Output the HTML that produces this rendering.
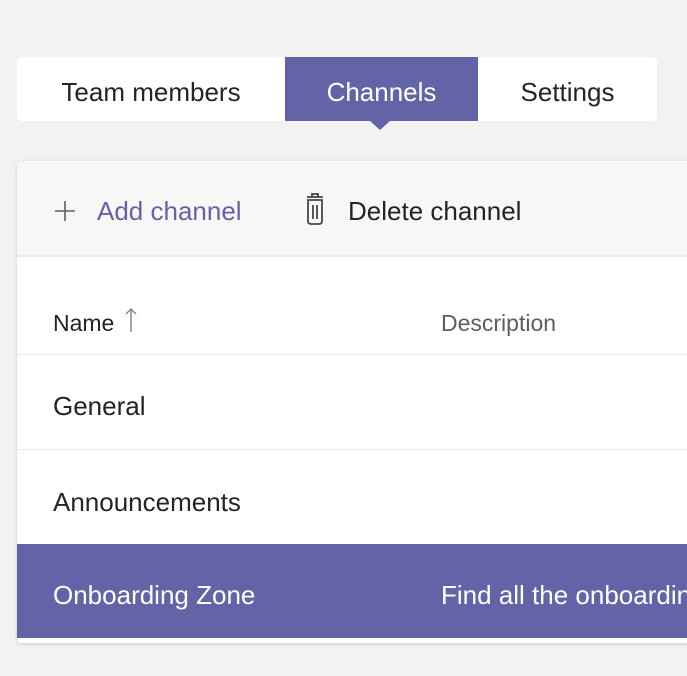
<!DOCTYPE html>
<html><head><style>
body{margin:0;width:687px;height:676px;background:#f3f2f1;font-family:"Liberation Sans",sans-serif;overflow:hidden;position:relative;color:#252423}
.tabs{position:absolute;left:17px;top:57px;width:640px;height:64px;background:#fff;border-radius:5px}
.tab{position:absolute;top:3px;height:64px;line-height:64px;font-size:26px;text-align:center}
.sel{background:#6264a7;color:#fff;top:0;line-height:70px}
.arrow{position:absolute;left:370px;top:121px;width:0;height:0;border-left:10px solid transparent;border-right:10px solid transparent;border-top:9px solid #6264a7}
.card{position:absolute;left:17px;top:161px;width:700px;height:482px;background:#fff;border-radius:4px;box-shadow:0 1px 4px rgba(0,0,0,.15);overflow:hidden}
.tool{position:absolute;left:0;top:0;width:100%;height:94px;background:#f8f7f6;border-bottom:2px solid #edebe9}
.t{position:absolute;font-size:26px;white-space:nowrap}
.row{position:absolute;left:0;width:100%;border-bottom:1px solid #edebe9}
</style></head><body>
<div class="tabs">
<div class="tab" style="left:0;width:268px">Team members</div>
<div class="tab sel" style="left:268px;width:193px">Channels</div>
<div class="tab" style="left:461px;width:179px">Settings</div>
</div>
<div class="arrow"></div>
<div class="card">
<div class="tool">
<svg style="position:absolute;left:36px;top:38px" width="24" height="24" viewBox="0 0 24 24"><path d="M12 2V22M2 12H22" stroke="#605e5c" stroke-width="1.6" fill="none"/></svg>
<div class="t" style="left:80px;top:35px;color:#6264a7">Add channel</div>
<svg style="position:absolute;left:287px;top:31px" width="22" height="34" viewBox="0 0 22 34"><path d="M8 5V2H14V5M3 5H19M4 8H18V29Q18 32 15 32H7Q4 32 4 29Z M9 13V27M13 13V27" stroke="#484644" stroke-width="1.8" fill="none"/></svg>
<div class="t" style="left:331px;top:35px">Delete channel</div>
</div>
<div class="row" style="top:96px;height:97px">
<div class="t" style="left:36px;top:53px;font-size:23px">Name</div>
<svg style="position:absolute;left:106px;top:50px" width="16" height="26" viewBox="0 0 16 26"><path d="M8 25V2M3 7L8 2L13 7" stroke="#8a8886" stroke-width="1.5" fill="none"/></svg>
<div class="t" style="left:424px;top:53px;font-size:23px;color:#605e5c">Description</div>
</div>
<div class="row" style="top:193px;height:95px"><div class="t" style="left:36px;top:37px">General</div></div>
<div class="row" style="top:289px;height:94px"><div class="t" style="left:36px;top:37px">Announcements</div></div>
<div class="row" style="top:383px;height:94px;background:#6264a7;color:#fff;border:0">
<div class="t" style="left:36px;top:36px">Onboarding Zone</div>
<div class="t" style="left:424px;top:36px">Find all the onboarding</div>
</div>
</div>
</body></html>
